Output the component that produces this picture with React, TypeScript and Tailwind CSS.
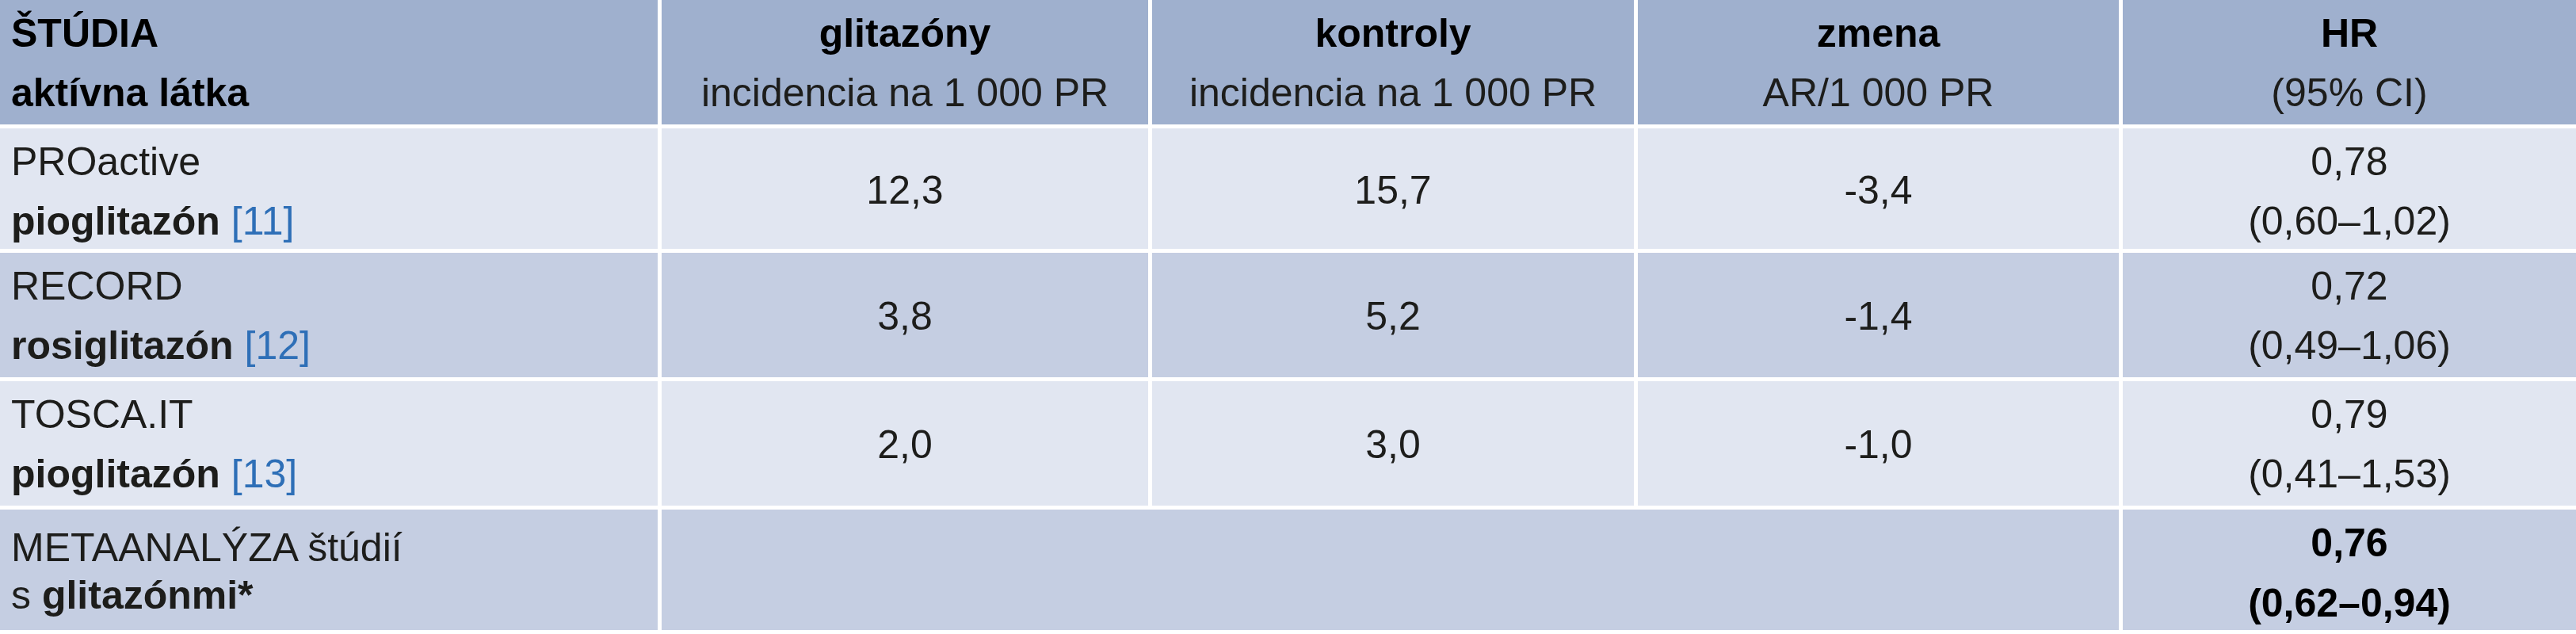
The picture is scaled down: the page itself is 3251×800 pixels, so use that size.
const rows = [
  { study: "PROactive", drug: "pioglitazón", ref: "[11]", gl: "12,3", ko: "15,7", ch: "-3,4", hr: "0,78", ci: "(0,60–1,02)", tone: "light" },
  { study: "RECORD", drug: "rosiglitazón", ref: "[12]", gl: "3,8", ko: "5,2", ch: "-1,4", hr: "0,72", ci: "(0,49–1,06)", tone: "dark" },
  { study: "TOSCA.IT", drug: "pioglitazón", ref: "[13]", gl: "2,0", ko: "3,0", ch: "-1,0", hr: "0,79", ci: "(0,41–1,53)", tone: "light" },
];

function HeadCell({ top, bottom, boldBottom }: { top: string; bottom: string; boldBottom?: boolean }) {
  return (
    <div className="bg-[#9fb0ce] pt-[5px] text-center">
      <div className="font-bold text-black">{top}</div>
      <div className={boldBottom ? "font-bold text-black" : "text-[#1d1d1b]"}>{bottom}</div>
    </div>
  );
}

export default function App() {
  return (
    <div className="w-[3251px] h-[800px] bg-white font-['Liberation_Sans',Arial,sans-serif] text-[50px] leading-[75px] text-[#1d1d1b]">
      <div className="grid grid-cols-[830px_614px_608px_607px_572px] grid-rows-[157px_152px_157px_157px_152px] gap-[5px]">
        {/* header */}
        <div className="bg-[#9fb0ce] pt-[5px] pl-[14px]">
          <div className="font-bold text-black">ŠTÚDIA</div>
          <div className="font-bold text-black">aktívna látka</div>
        </div>
        <HeadCell top="glitazóny" bottom="incidencia na 1 000 PR" />
        <HeadCell top="kontroly" bottom="incidencia na 1 000 PR" />
        <HeadCell top="zmena" bottom="AR/1 000 PR" />
        <HeadCell top="HR" bottom="(95% CI)" />

        {rows.map((r) => {
          const bg = r.tone === "light" ? "bg-[#e1e6f1]" : "bg-[#c5cee2]";
          return [
            <div key={r.study + "a"} className={`${bg} pt-[5px] pl-[14px]`}>
              <div>{r.study}</div>
              <div>
                <span className="font-bold">{r.drug}</span> <span className="text-[#2e6fb7]">{r.ref}</span>
              </div>
            </div>,
            <div key={r.study + "b"} className={`${bg} flex items-center justify-center pt-[4px]`}>{r.gl}</div>,
            <div key={r.study + "c"} className={`${bg} flex items-center justify-center pt-[4px]`}>{r.ko}</div>,
            <div key={r.study + "d"} className={`${bg} flex items-center justify-center pt-[4px]`}>{r.ch}</div>,
            <div key={r.study + "e"} className={`${bg} pt-[5px] text-center`}>
              <div>{r.hr}</div>
              <div>{r.ci}</div>
            </div>,
          ];
        })}

        {/* meta-analysis */}
        <div className="bg-[#c5cee2] pt-[18px] pl-[14px] leading-[60px]">
          <div>METAANALÝZA štúdií</div>
          <div>
            s <span className="font-bold">glitazónmi*</span>
          </div>
        </div>
        <div className="col-span-3 bg-[#c5cee2]"></div>
        <div className="bg-[#c5cee2] pt-[5px] text-center font-bold text-black">
          <div>0,76</div>
          <div className="leading-[77px]">(0,62–0,94)</div>
        </div>
      </div>
    </div>
  );
}
